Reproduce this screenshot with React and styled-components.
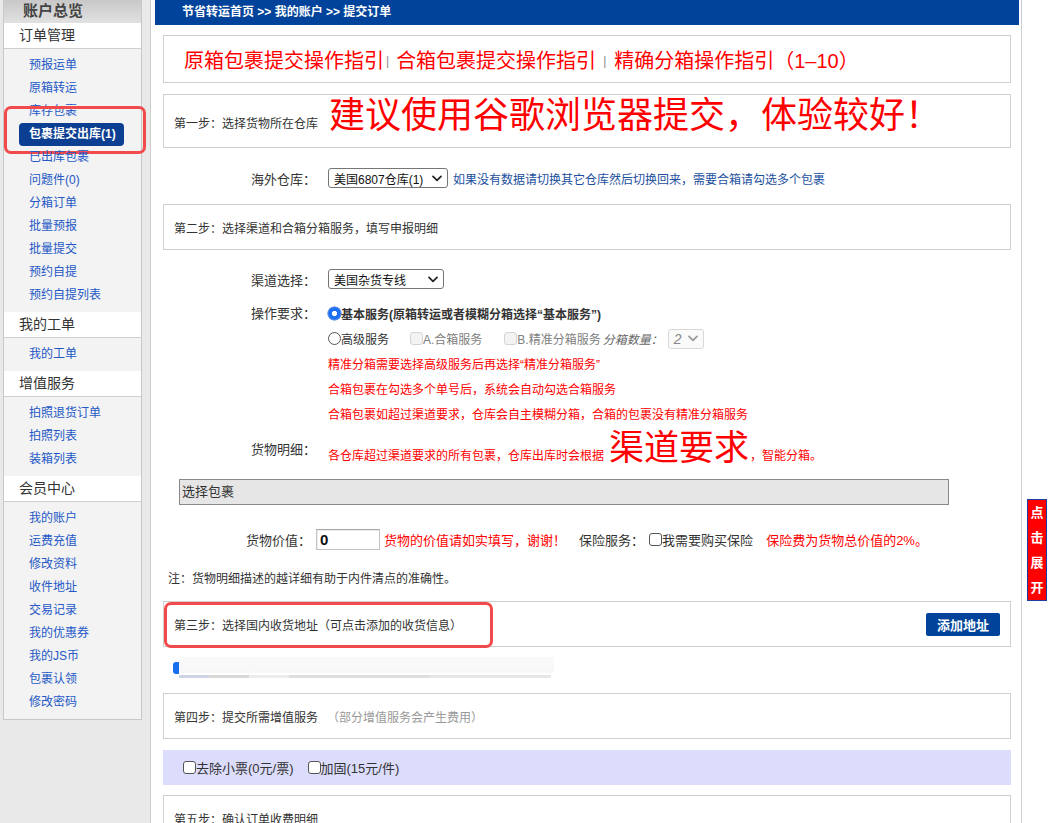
import React from "react";
import styled, { createGlobalStyle, css } from "styled-components";

const FONT = `"Liberation Sans", "Noto Sans CJK SC", Arial, sans-serif`;

const GlobalStyle = createGlobalStyle`
  html, body { margin: 0; padding: 0; background: #fff; }
  body { font-family: ${FONT}; color: #333; }
  * { box-sizing: border-box; }
`;

const Page = styled.div`
  display: flex;
  align-items: stretch;
  width: 1051px;
  min-height: 823px;
  overflow: hidden;
`;

/* ---------- sidebar ---------- */
const SideCol = styled.aside`
  flex: none;
  width: 151px;
  padding-left: 3px;
  background: #e9e9e9;
  border-right: 1px solid #cdcdcd;
`;

const SidePanel = styled.nav`
  width: 139px;
  background: #f3f3f3;
  border: 1px solid #c8c8c8;
  border-top: none;
`;

const PanelTitle = styled.div`
  height: 23px;
  line-height: 21px;
  padding-left: 19px;
  font-size: 15px;
  font-weight: bold;
  color: #444;
  background: linear-gradient(#c8c8c8, #e1e1e1);
`;

const GroupTitle = styled.div`
  height: 26px;
  line-height: 25px;
  padding-left: 15px;
  font-size: 14px;
  color: #333;
  background: #fff;
  border-bottom: 1px solid #cfcfcf;
`;

const ItemList = styled.ul`
  list-style: none;
  margin: 0;
  padding: 5px 0;
`;

const Item = styled.li`
  position: relative;
  height: 23px;
  line-height: 23px;
  padding-left: 25px;
  font-size: 12px;
`;

const ItemLink = styled.a`
  color: #2458c6;
  text-decoration: none;
  white-space: nowrap;
  ${(p) =>
    p.$active &&
    css`
      display: inline-block;
      margin-left: -10px;
      padding: 0 8px 0 10px;
      color: #fff;
      font-weight: bold;
      background: #0c3f92;
      border-radius: 4px;
    `}
`;

const SideMark = styled.span`
  position: absolute;
  left: 0;
  top: -17px;
  width: 142px;
  height: 48px;
  border: 3px solid #f04a4a;
  border-radius: 7px;
  pointer-events: none;
`;

/* ---------- main ---------- */
const Main = styled.main`
  flex: none;
  width: 871px;
  padding: 0 2px 0 4px;
  border-right: 1px solid #cfcfcf;
`;

const TopBar = styled.div`
  height: 25px;
  line-height: 25px;
  padding-left: 27px;
  background: #01439a;
  color: #fff;
  font-size: 12px;
  font-weight: bold;
`;

const Content = styled.div`
  padding: 10px 8px 0;
`;

const LinksBox = styled.div`
  display: flex;
  align-items: center;
  height: 48px;
  padding-left: 20px;
  border: 1px solid #cfcfcf;
  font-size: 20px;
  color: #f00;
  white-space: nowrap;
`;

const GuideLink = styled.a`
  color: #f00;
  text-decoration: none;
`;

const Sep = styled.span`
  font-size: 12px;
  color: #888;
  margin: ${(p) => (p.$wide ? "3px 8px 0 7px" : "3px 7px 0 2px")};
`;

const StepBox = styled.div`
  position: relative;
  display: flex;
  align-items: center;
  justify-content: space-between;
  height: 46px;
  margin-top: ${(p) => p.$mt}px;
  padding: 0 10px;
  border: 1px solid #cfcfcf;
  font-size: 12px;
  color: #333;
  white-space: nowrap;
`;

const IntroStep = styled(StepBox)`
  align-items: baseline;
  justify-content: flex-start;
  height: 54px;
  padding-top: 1px;
`;

const BigNotice = styled.span`
  margin-left: 11px;
  font-size: 36px;
  line-height: 40px;
  color: #f00;
`;

const StepHint = styled.span`
  margin-left: 9px;
  color: #999;
`;

const StepMark = styled.span`
  position: absolute;
  left: 0;
  top: 0;
  width: 329px;
  height: 46px;
  border: 3px solid #f04a4a;
  border-radius: 7px;
  pointer-events: none;
`;

const AddBtn = styled.button`
  width: 74px;
  height: 23px;
  padding: 0;
  border: 0;
  border-radius: 2px;
  background: #01439a;
  color: #fff;
  font: bold 13px ${FONT};
`;

const FormRow = styled.div`
  display: grid;
  grid-template-columns: 153px 1fr;
  column-gap: 12px;
  align-items: ${(p) => (p.$top ? "start" : "center")};
  margin-top: ${(p) => p.$mt}px;
  min-height: ${(p) => p.$h}px;
`;

const Label = styled.div`
  text-align: right;
  font-size: 13px;
  line-height: ${(p) => (p.$lh ? `${p.$lh}px` : "normal")};
  color: #333;
  white-space: nowrap;
`;

const Field = styled.div`
  display: flex;
  align-items: center;
  white-space: nowrap;
`;

const SelectBox = styled.div`
  display: inline-flex;
  align-items: center;
  justify-content: space-between;
  width: ${(p) => p.$w}px;
  height: 20px;
  padding: 0 5px;
  border: 1px solid #767676;
  border-radius: 3px;
  background: #fff;
  font-size: 12px;
  color: #111;
`;

const MiniSelect = styled(SelectBox)`
  margin-left: 5px;
  border-color: #d8d8d8;
  background: #fafafa;
  color: #888;
  font-style: italic;
  font-size: 14px;
`;

const BlueNote = styled.span`
  margin-left: 5px;
  font-size: 12px;
  color: #1b4f9e;
`;

const Lines = styled.div`
  display: flex;
  flex-direction: column;
`;

const Line = styled.div`
  display: flex;
  align-items: center;
  height: 25px;
  font-size: 12px;
  white-space: nowrap;
`;

const Radio = styled.span`
  flex: none;
  display: inline-block;
  width: 13px;
  height: 13px;
  border-radius: 50%;
  ${(p) =>
    p.$checked
      ? css`
          background: radial-gradient(circle, #fff 0 2.4px, #1f6ff2 2.9px);
          box-shadow: 0 0 0 0.5px #1859c9;
        `
      : css`
          background: #fff;
          border: 1px solid #555;
        `}
`;

const Check = styled.span`
  flex: none;
  display: inline-block;
  width: 13px;
  height: 13px;
  margin-left: ${(p) => p.$ml || 0}px;
  border-radius: 3px;
  border: 1px solid ${(p) => (p.$disabled ? "#d4d4d4" : "#555")};
  background: ${(p) => (p.$disabled ? "#f3f3f3" : "#fff")};
`;

const Strong = styled.span`
  font-weight: bold;
  color: #333;
`;

const Plain = styled.span`
  color: #333;
`;

const Muted = styled.span`
  color: #808080;
`;

const Qty = styled.span`
  margin-left: 2px;
  font-style: italic;
  color: #666;
`;

const Warn = styled.span`
  color: #f00;
  font-size: ${(p) => p.$size || 12}px;
  margin-left: ${(p) => p.$ml || 0}px;
`;

const DetailField = styled.div`
  display: flex;
  align-items: baseline;
  height: 40px;
  color: #f00;
  font-size: 12px;
  white-space: nowrap;
`;

const HugeWord = styled.span`
  margin: 0 1px 0 5px;
  font-size: 35px;
  line-height: 40px;
`;

const PickBox = styled.div`
  width: 770px;
  height: 26px;
  margin: 11px 0 0 16px;
  padding-left: 2px;
  line-height: 24px;
  font-size: 13px;
  color: #333;
  background: #e6e6e6;
  border: 1px solid #888;
`;

const ValueRow = styled.div`
  display: flex;
  align-items: center;
  justify-content: center;
  height: 22px;
  margin-top: 23px;
  font-size: 13px;
  color: #333;
  white-space: nowrap;
`;

const ValueInput = styled.div`
  width: 64px;
  height: 21px;
  margin-left: 5px;
  padding-left: 3px;
  line-height: 20px;
  font-size: 15px;
  font-weight: bold;
  color: #111;
  border: 1px solid #c4c4c4;
  border-top-color: #a8a8a8;
  box-shadow: inset 1px 1px 0 #ececec;
`;

const InsLabel = styled.span`
  margin-left: 13px;
`;

const Note = styled.div`
  margin-top: 20px;
  padding-left: 5px;
  line-height: 18px;
  font-size: 12px;
  color: #333;
`;

const AddrRow = styled.div`
  display: flex;
  align-items: flex-start;
  height: 22px;
  margin-top: 10px;
  padding-left: 10px;
`;

const AddrCheck = styled.span`
  width: 6px;
  height: 12px;
  margin-top: 5px;
  border-radius: 3px 0 0 3px;
  background: #1a6ff0;
`;

const AddrBlur = styled.div`
  width: 375px;
  height: 22px;
  background: linear-gradient(
      to right,
      #cfd3e6 0 30px,
      #d9d9d9 30px 70px,
      #ececec 70px 110px,
      #dedede 110px 250px,
      #e6e6e6 250px 372px,
      transparent 372px
    )
    0 18px / 100% 3px no-repeat,
    linear-gradient(#fafafa, #f7f7f7) 0 0 / 100% 16px no-repeat;
  filter: blur(0.6px);
`;

const ExtraBar = styled.div`
  display: flex;
  align-items: center;
  height: 35px;
  margin-top: 11px;
  padding-left: 20px;
  background: #dcdcfc;
  font-size: 13px;
  color: #333;
  white-space: nowrap;
`;

const SideTab = styled.div`
  position: fixed;
  right: 4px;
  top: 499px;
  width: 20px;
  display: flex;
  flex-direction: column;
  align-items: center;
  background: #f00;
  border: 1px solid #1b3fa0;
  color: #fff;
  font-size: 13px;
  font-weight: bold;
`;

const TabChar = styled.span`
  line-height: 25px;
`;

const Chevron = ({ color = "#222" }) => (
  <svg width="10" height="7" viewBox="0 0 10 7">
    <path d="M1 1.3l4 4 4-4" stroke={color} strokeWidth="1.7" fill="none" strokeLinecap="round" strokeLinejoin="round" />
  </svg>
);

const groups = [
  {
    title: "订单管理",
    items: [
      "预报运单",
      "原箱转运",
      "库存包裹",
      "包裹提交出库(1)",
      "已出库包裹",
      "问题件(0)",
      "分箱订单",
      "批量预报",
      "批量提交",
      "预约自提",
      "预约自提列表",
    ],
    active: 3,
  },
  { title: "我的工单", items: ["我的工单"] },
  { title: "增值服务", items: ["拍照退货订单", "拍照列表", "装箱列表"] },
  {
    title: "会员中心",
    items: ["我的账户", "运费充值", "修改资料", "收件地址", "交易记录", "我的优惠券", "我的JS币", "包裹认领", "修改密码"],
  },
];

export default function App() {
  return (
    <>
      <GlobalStyle />
      <Page>
        <SideCol>
          <SidePanel>
            <PanelTitle>账户总览</PanelTitle>
            {groups.map((g) => (
              <React.Fragment key={g.title}>
                <GroupTitle>{g.title}</GroupTitle>
                <ItemList>
                  {g.items.map((it, i) => (
                    <Item key={it}>
                      <ItemLink href="#" $active={g.active === i}>
                        {it}
                      </ItemLink>
                      {g.active === i && <SideMark />}
                    </Item>
                  ))}
                </ItemList>
              </React.Fragment>
            ))}
          </SidePanel>
        </SideCol>

        <Main>
          <TopBar>节省转运首页 &gt;&gt; 我的账户 &gt;&gt; 提交订单</TopBar>
          <Content>
            <LinksBox>
              <GuideLink href="#">原箱包裹提交操作指引</GuideLink>
              <Sep>|</Sep>
              <GuideLink href="#">合箱包裹提交操作指引</GuideLink>
              <Sep $wide>|</Sep>
              <GuideLink href="#">精确分箱操作指引（1–10）</GuideLink>
            </LinksBox>

            <IntroStep $mt={11}>
              <span>第一步：选择货物所在仓库</span>
              <BigNotice>建议使用谷歌浏览器提交，体验较好！</BigNotice>
            </IntroStep>

            <FormRow $mt={20} $h={20}>
              <Label>海外仓库：</Label>
              <Field>
                <SelectBox $w={120}>
                  <span>美国6807仓库(1)</span>
                  <Chevron />
                </SelectBox>
                <BlueNote>如果没有数据请切换其它仓库然后切换回来，需要合箱请勾选多个包裹</BlueNote>
              </Field>
            </FormRow>

            <StepBox $mt={16}>
              <span>第二步：选择渠道和合箱分箱服务，填写申报明细</span>
            </StepBox>

            <FormRow $mt={19} $h={20}>
              <Label>渠道选择：</Label>
              <Field>
                <SelectBox $w={116}>
                  <span>美国杂货专线</span>
                  <Chevron />
                </SelectBox>
              </Field>
            </FormRow>

            <FormRow $mt={12} $top>
              <Label $lh={25}>操作要求：</Label>
              <Lines>
                <Line>
                  <Radio $checked />
                  <Strong>基本服务(原箱转运或者模糊分箱选择“基本服务”)</Strong>
                </Line>
                <Line>
                  <Radio />
                  <Plain>高级服务</Plain>
                  <Check $disabled $ml={21} />
                  <Muted>A.合箱服务</Muted>
                  <Check $disabled $ml={22} />
                  <Muted>B.精准分箱服务</Muted>
                  <Qty>分箱数量：</Qty>
                  <MiniSelect $w={36}>
                    <span>2</span>
                    <Chevron color="#999" />
                  </MiniSelect>
                </Line>
                <Line>
                  <Warn>精准分箱需要选择高级服务后再选择“精准分箱服务”</Warn>
                </Line>
                <Line>
                  <Warn>合箱包裹在勾选多个单号后，系统会自动勾选合箱服务</Warn>
                </Line>
                <Line>
                  <Warn>合箱包裹如超过渠道要求，仓库会自主模糊分箱，合箱的包裹没有精准分箱服务</Warn>
                </Line>
              </Lines>
            </FormRow>

            <FormRow $mt={2} $h={40}>
              <Label>货物明细：</Label>
              <DetailField>
                <span>各仓库超过渠道要求的所有包裹，仓库出库时会根据</span>
                <HugeWord>渠道要求</HugeWord>
                <span>，智能分箱。</span>
              </DetailField>
            </FormRow>

            <PickBox>选择包裹</PickBox>

            <ValueRow>
              <span>货物价值：</span>
              <ValueInput>0</ValueInput>
              <Warn $size={13} $ml={4}>
                货物的价值请如实填写，谢谢！
              </Warn>
              <InsLabel>保险服务：</InsLabel>
              <Check $ml={5} />
              <span>我需要购买保险</span>
              <Warn $size={13} $ml={13}>
                保险费为货物总价值的2%。
              </Warn>
            </ValueRow>

            <Note>注：货物明细描述的越详细有助于内件清点的准确性。</Note>

            <StepBox $mt={13}>
              <span>第三步：选择国内收货地址（可点击添加的收货信息）</span>
              <AddBtn type="button">添加地址</AddBtn>
              <StepMark />
            </StepBox>

            <AddrRow>
              <AddrCheck />
              <AddrBlur />
            </AddrRow>

            <StepBox $mt={14}>
              <span>
                第四步：提交所需增值服务<StepHint>（部分增值服务会产生费用）</StepHint>
              </span>
            </StepBox>

            <ExtraBar>
              <Check />
              <span>去除小票(0元/票)</span>
              <Check $ml={14} />
              <span>加固(15元/件)</span>
            </ExtraBar>

            <StepBox $mt={10}>
              <span>第五步：确认订单收费明细</span>
            </StepBox>
          </Content>
        </Main>
      </Page>

      <SideTab>
        <TabChar>点</TabChar>
        <TabChar>击</TabChar>
        <TabChar>展</TabChar>
        <TabChar>开</TabChar>
      </SideTab>
    </>
  );
}
